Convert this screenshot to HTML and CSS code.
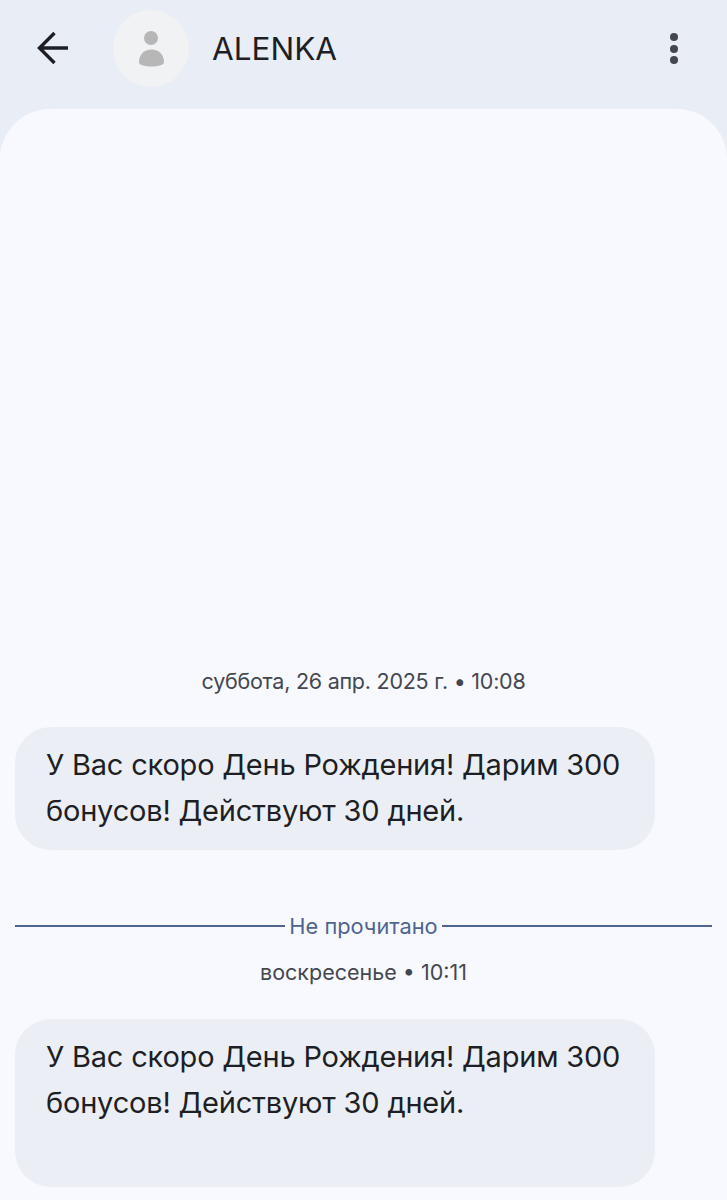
FILE: index.html
```html
<!DOCTYPE html>
<html lang="ru">
<head>
<meta charset="utf-8">
<title>ALENKA</title>
<link rel="stylesheet" href="styles.css">
</head>
<body>
<div class="screen">
  <header class="topbar">
    <svg class="back" width="34" height="34" viewBox="0 0 34 34" aria-hidden="true"><path d="M31 17H4M17.500 2 2.500 17l15 15" fill="none" stroke="#1d1f24" stroke-width="3.400"/></svg>
    <div class="avatar">
      <svg width="30" height="38" viewBox="0 0 30 38" aria-hidden="true"><circle cx="15" cy="8" r="7" fill="#b7b7b7"/><path d="M3 32C3 24 9 19.500 15.500 19.500S28 24 28 32C28 35.500 21 36.500 15.500 36.500S3 35.500 3 32Z" fill="#b7b7b7"/></svg>
    </div>
    <div class="name">ALENKA</div>
    <div class="more"><i></i><i></i><i></i></div>
  </header>
  <main class="chat">
    <p class="stamp first">суббота, 26 апр. 2025 г. • 10:08</p>
    <div class="bubble">У Вас скоро День Рождения! Дарим 300 бонусов! Действуют 30 дней.</div>
    <div class="unread"><span>Не прочитано</span></div>
    <p class="stamp second">воскресенье • 10:11</p>
    <div class="bubble tall">У Вас скоро День Рождения! Дарим 300 бонусов! Действуют 30 дней.</div>
  </main>
</div>
</body>
</html>
```
FILE: styles.css
```css
* { box-sizing: border-box; }
html, body { margin: 0; height: 100%; }
body { background: #e9edf5; font-family: Inter, Roboto, "Liberation Sans", sans-serif; overflow: hidden; }
.screen { height: 1200px; display: flex; flex-direction: column; }
.topbar { height: 109px; flex: none; display: flex; align-items: flex-start; padding: 10px 0 0 37px; }
.back { margin-top: 21px; flex: none; }
.avatar { width: 76px; height: 77px; border-radius: 50%; background: #f1f2f3; margin-left: 42px; display: flex; align-items: center; justify-content: center; flex: none; }
.name { margin: 19px 0 0 23px; font-size: 31.500px; line-height: 40px; color: #1d1f24; }
.more { margin: 23px 49px 0 auto; width: 8px; display: flex; flex-direction: column; gap: 3.500px; }
.more i { display: block; width: 8px; height: 8px; border-radius: 50%; background: #44474f; }
.chat { flex: 1; background: #f8f9fe; border-radius: 50px 50px 0 0; padding: 556px 15px 0; }
.stamp { margin: 0; text-align: center; font-size: 21.500px; line-height: 32px; color: #44474f; letter-spacing: -0.25px; }
.first { height: 32px; }
.bubble { background: #ebeef5; color: #1d1f24; width: 640px; border-radius: 36px; font-size: 29px; letter-spacing: -0.2px; line-height: 46px; padding: 15px 30px 16px 31px; margin-top: 30px; }
.tall { height: 168px; margin-top: 31px; }
.unread { display: flex; align-items: center; gap: 4px; margin-top: 60px; height: 32px; color: #4f6590; font-size: 21.800px; }
.unread::before, .unread::after { content: ""; flex: 1; height: 2px; background: #4f6590; }
.second { margin-top: 14px; letter-spacing: 0; }
```
